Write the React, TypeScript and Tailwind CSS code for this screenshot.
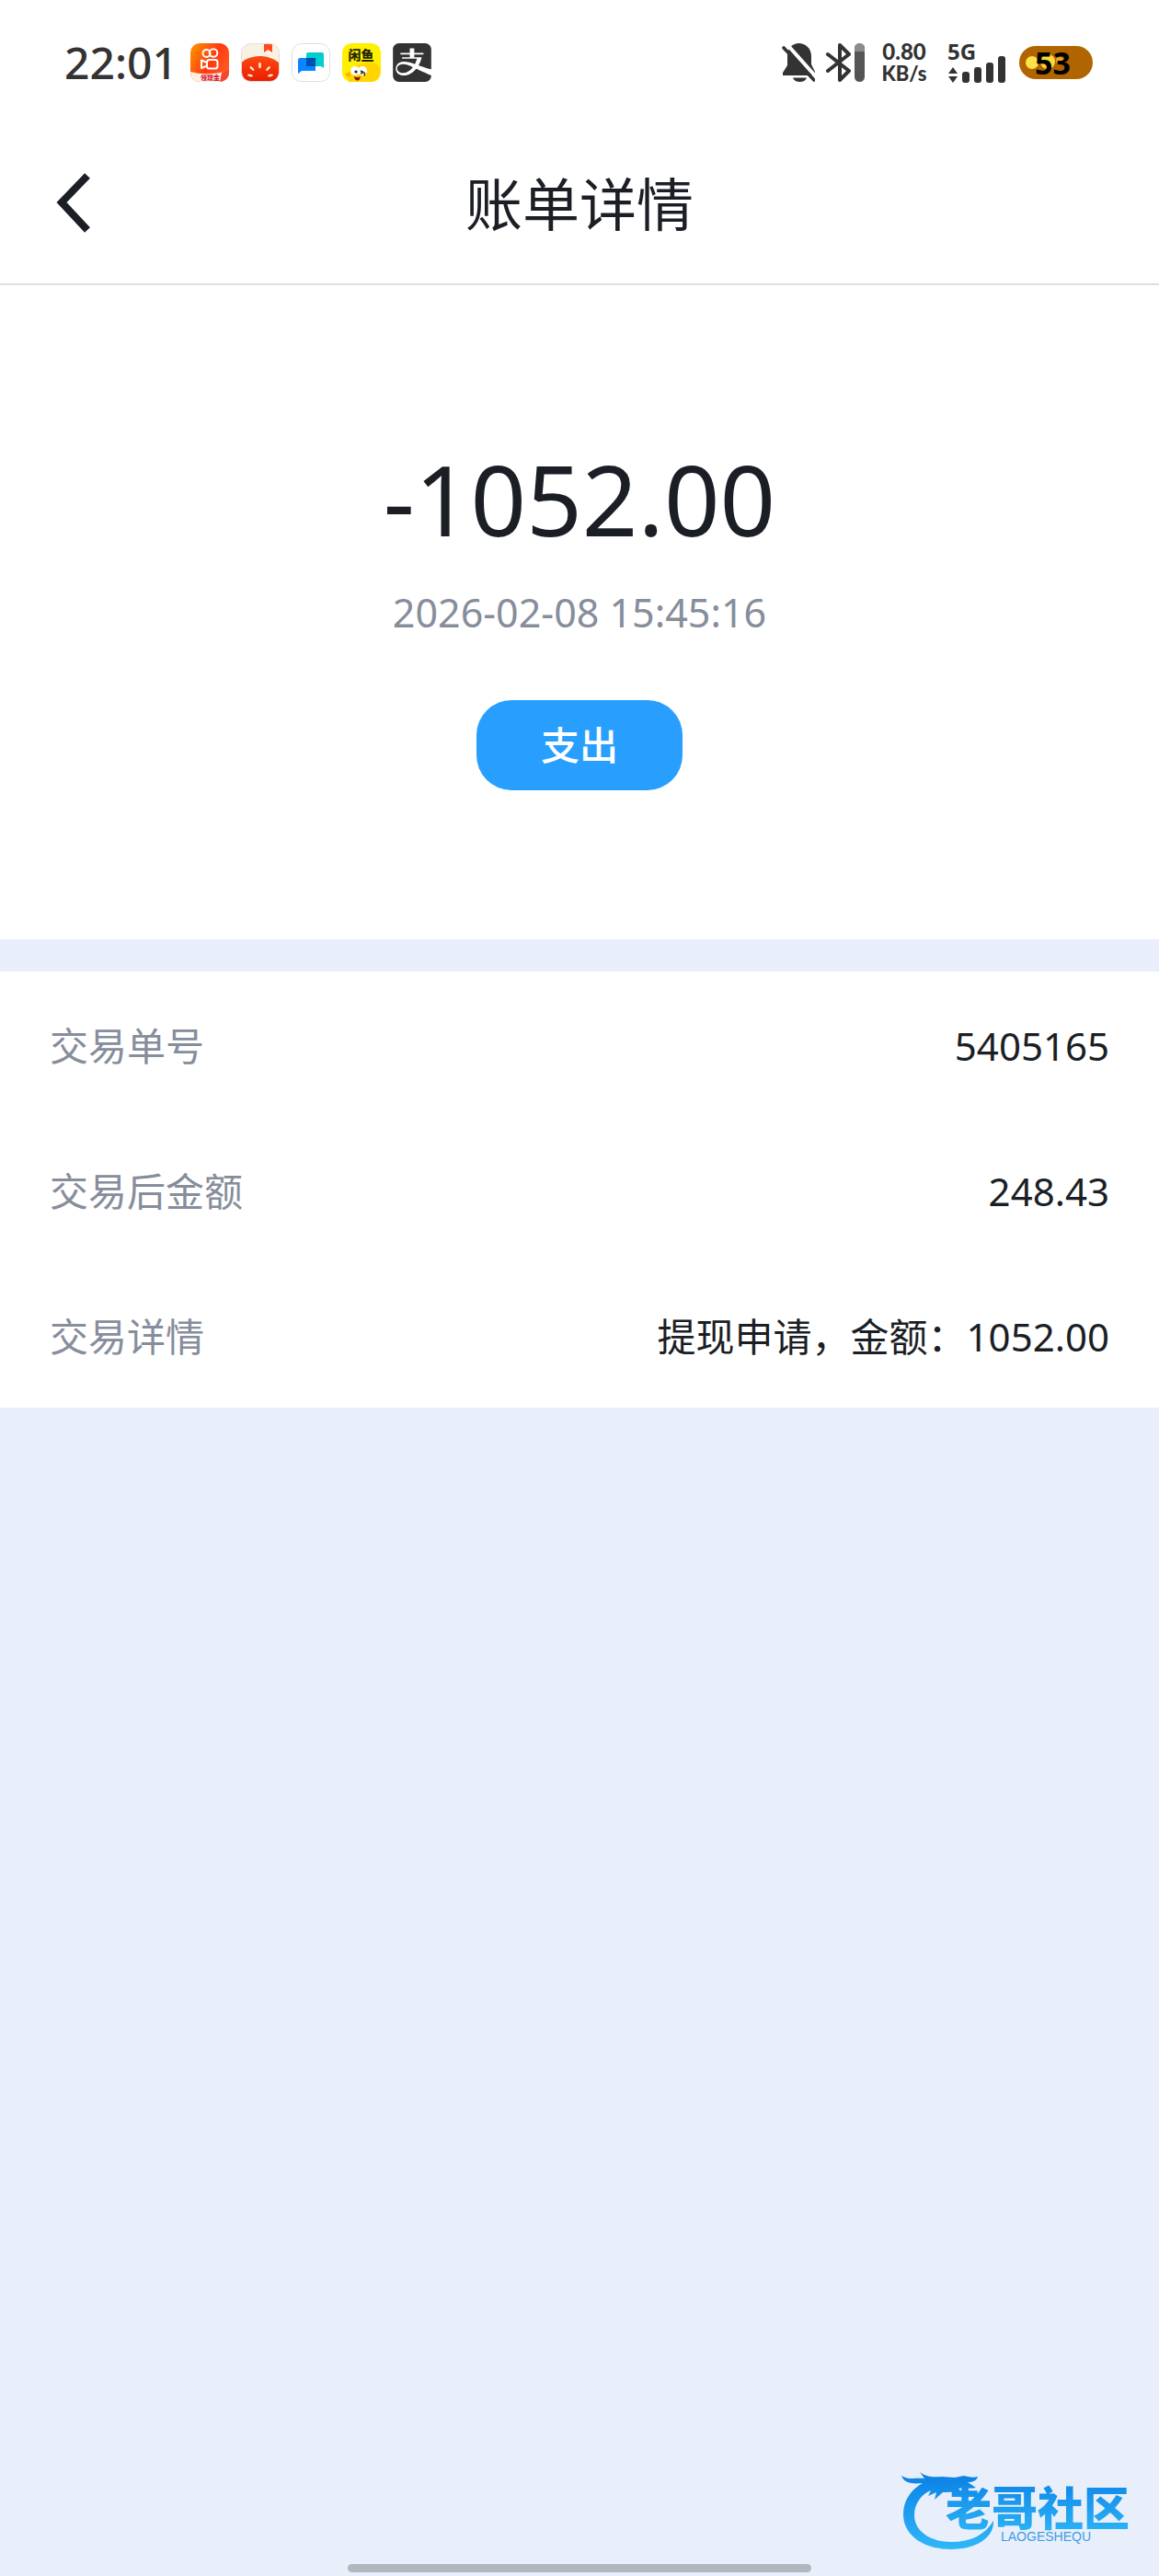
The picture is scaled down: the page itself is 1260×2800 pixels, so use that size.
import { SiAlipay } from "react-icons/si";

const details = [
    { label: "交易单号", value: "5405165" },
    { label: "交易后金额", value: "248.43" },
    { label: "交易详情", value: "提现申请，金额：1052.00" },
];

function KuaishouIcon() {
    return (
        <svg viewBox="0 0 42 42" className="size-[42px]" aria-hidden="true">
            <defs>
                <linearGradient id="ks" x1="0" y1="0" x2="1" y2="0.6">
                    <stop offset="0" stopColor="#ff9a00" />
                    <stop offset="0.6" stopColor="#ff3a10" />
                    <stop offset="1" stopColor="#ff5a24" />
                </linearGradient>
                <clipPath id="ksClip">
                    <rect width="42" height="42" rx="10" />
                </clipPath>
            </defs>
            <g clipPath="url(#ksClip)">
                <rect width="42" height="42" fill="url(#ks)" />
                <path d="M0 31q18 5 42-1v12H0z" fill="#fff1e0" />
                <path d="M34 32l8-3v8l-6 5h-4z" fill="#f4472c" />
                <g fill="none" stroke="#fff" strokeWidth="2">
                    <circle cx="17.500" cy="11" r="4" />
                    <circle cx="25" cy="10.500" r="4.300" />
                    <rect x="18" y="18" width="11.500" height="9.500" rx="2.500" />
                    <path d="M18 21l-6-2.500v8.500l6-2.500" strokeLinejoin="round" />
                </g>
                <text x="11" y="39.500" fontSize="7" fontWeight="900" fill="#d81e3a" fontFamily="Noto Sans CJK SC, sans-serif">
                    领现金
                </text>
            </g>
        </svg>
    );
}

function TomatoIcon() {
    return (
        <svg viewBox="0 0 42 42" className="size-[42px]" aria-hidden="true">
            <defs>
                <linearGradient id="tomato" x1="0" y1="0" x2="0" y2="1">
                    <stop offset="0" stopColor="#ff4a12" />
                    <stop offset="1" stopColor="#e81c00" />
                </linearGradient>
                <clipPath id="tomatoClip">
                    <rect x="0.500" y="0.500" width="41" height="41" rx="10" />
                </clipPath>
            </defs>
            <g clipPath="url(#tomatoClip)">
                <rect width="42" height="42" fill="#f8f1e4" />
                <path d="M25 0h9v10l-4.500-3-4.500 3z" fill="#ff4b1f" />
                <path d="M0 22c5-7 16-8 22-8s15 3 20 8v20H0z" fill="url(#tomato)" />
                <g fill="#ffe9cf">
                    <ellipse cx="20.500" cy="24" rx="1.400" ry="3.200" />
                    <ellipse cx="12" cy="27.500" rx="1.300" ry="3.100" transform="rotate(-42 12 27.500)" />
                    <ellipse cx="29.500" cy="27.500" rx="1.300" ry="3.100" transform="rotate(42 29.500 27.500)" />
                    <ellipse cx="10" cy="35" rx="3" ry="1.300" transform="rotate(8 10 35)" />
                    <ellipse cx="32" cy="35" rx="3" ry="1.300" transform="rotate(-8 32 35)" />
                </g>
            </g>
            <rect x="0.500" y="0.500" width="41" height="41" rx="10" fill="none" stroke="#e6ded6" />
        </svg>
    );
}

function ChatIcon() {
    return (
        <svg viewBox="0 0 42 42" className="size-[42px]" aria-hidden="true">
            <rect x="0.500" y="0.500" width="41" height="41" rx="10" fill="#fff" stroke="#dedede" />
            <path d="M18 10h15q2 0 2 2v15l-3-2H16V12q0-2 2-2z" fill="#00cdd2" />
            <path d="M9 16h17v14H11l-4 3V18q0-2 2-2z" fill="#0a84ff" />
            <path d="M16 16h10v9H16z" fill="#0050b4" />
        </svg>
    );
}

function XianyuIcon() {
    return (
        <svg viewBox="0 0 42 42" className="size-[42px]" aria-hidden="true">
            <rect width="42" height="42" rx="10" fill="#ffef00" />
            <path d="M7 42c-1-6-1-13 5-16 6-4 15-5 22-5 6 2 8 6 7 12-1 5-4 9-9 9z" fill="#ffd500" />
            <path d="M3 33l5-2 2 5-5 1z" fill="#ffb800" />
            <text x="6.500" y="18" fontSize="14" fontWeight="900" fill="#242400" fontFamily="Noto Sans CJK SC, sans-serif">
                闲鱼
            </text>
            <circle cx="14" cy="30" r="5" fill="#fff" />
            <circle cx="22" cy="30" r="5" fill="#fff" />
            <circle cx="15" cy="31" r="1.600" fill="#222" />
            <path d="M20 30l3 1.500-3 1.500M25 32q-2 2 0 3" stroke="#222" strokeWidth="1.400" fill="none" />
            <path d="M13 36q4 2 7 0-1 5-4 4.500-3-1-3-4.500z" fill="#8a1505" />
        </svg>
    );
}

function BellOffIcon() {
    return (
        <svg viewBox="0 0 36 42" className="h-[42px] w-9" aria-hidden="true">
            <path d="M6 14C6 5 12 0 18.500 0S32 5 32 14v9l4 8v4H1v-3l5-8z" fill="#333" />
            <path d="M12 37.500h15c-1 3-4 4.500-7.500 4.500S13 40.500 12 37.500z" fill="#333" />
            <path d="M4-.500L38 37.500" stroke="#fff" strokeWidth="4" />
            <path d="M2 5l33 35" stroke="#333" strokeWidth="3.600" strokeLinecap="round" />
        </svg>
    );
}

function BluetoothIcon() {
    return (
        <svg viewBox="0 0 28 42" className="h-[42px] w-7" fill="none" stroke="#333" strokeWidth="4" strokeLinejoin="round" strokeLinecap="round" aria-hidden="true">
            <path d="M2 12l23 18-10 10V2l10 10L2 30" />
        </svg>
    );
}

function SignalIcon() {
    return (
        <svg viewBox="0 0 64 30" className="h-[30px] w-16" fill="#333" aria-hidden="true">
            <path d="M6 13l5 7H1zM6 30l5-7H1z" />
            <rect x="16" y="18" width="8" height="12" rx="3" />
            <rect x="29" y="13" width="8" height="17" rx="3" />
            <rect x="42" y="8" width="8" height="22" rx="3" />
            <rect x="55" y="1" width="8" height="29" rx="3" />
        </svg>
    );
}

function StatusBar() {
    return (
        <div className="flex h-[136px] items-center justify-between pr-[72px] pl-[70px] text-[#333]">
            <div className="flex items-center gap-[13px]">
                <span className="w-[124px] text-[48px] leading-[48px] font-medium">22:01</span>
                <KuaishouIcon />
                <TomatoIcon />
                <ChatIcon />
                <XianyuIcon />
                <SiAlipay className="size-[42px]" />
            </div>

            <div className="flex items-center">
                <BellOffIcon />
                <div className="ml-3 flex items-center gap-[3px]">
                    <BluetoothIcon />
                    <div className="h-[42px] w-[11px] overflow-hidden rounded-full bg-[#555]">
                        <div className="h-[9px] bg-[#8c8c8c]" />
                    </div>
                </div>
                <div className="ml-4 flex w-[54px] flex-col items-center font-['Lato',sans-serif] text-[24px] leading-[24px] font-black">
                    <span>0.80</span>
                    <span className="text-[22px]">KB/s</span>
                </div>
                <div className="ml-5 flex flex-col">
                    <span className="h-[14px] text-[24px] leading-[20px] font-bold">5G</span>
                    <SignalIcon />
                </div>
                {/* Battery */}
                <div className="relative ml-[14px] flex h-9 w-20 items-center rounded-full bg-[#b06500]">
                    <svg viewBox="0 0 80 36" className="absolute inset-0 size-full" aria-hidden="true">
                        <circle cx="14" cy="18" r="7" fill="#ffe24a" />
                        <circle cx="31" cy="17" r="8" fill="#ffd83a" />
                        <circle cx="44" cy="16" r="4" fill="#e8a820" />
                    </svg>
                    <span className="relative pl-[17px] text-[34px] leading-[36px] font-bold text-black">53</span>
                </div>
            </div>
        </div>
    );
}

function Watermark() {
    return (
        <svg viewBox="0 0 264 88" className="h-[88px] w-[264px]" role="img" aria-label="老哥社区">
            <defs>
                <linearGradient id="wave" x1="0" y1="0" x2="0" y2="1">
                    <stop offset="0" stopColor="#0a7fe6" />
                    <stop offset="1" stopColor="#2fb8f8" />
                </linearGradient>
            </defs>
            {/* Dragon */}
            <path
                d="M2 6c8 5 16 2 25 3l-5-7c9 7 17 5 24 5l14 1 10-2c7 2 11 2 15 1-1 4-5 6-11 6l9 6c-7 2-14-1-19 1l5 5c-8-2-16-1-22-1l-9 8 2-8-9 4 3-6c-10 4-18 14-18 27 0 17 17 29 40 29 22 0 37-8 46-23 1 18-18 31-46 31C25 86 4 70 4 48c0-16 9-27 21-34C16 15 5 15 2 6z"
                fill="url(#wave)"
            />
            <text x="50" y="60" fontSize="50" fontWeight="900" fill="url(#wave)" fontFamily="Noto Sans CJK SC, sans-serif">
                老哥社区
            </text>
            <text x="110" y="77" fontSize="14" fill="#3d9be6" fontFamily="Liberation Sans, sans-serif">
                LAOGESHEQU
            </text>
        </svg>
    );
}

export default function App() {
    return (
        <div className="flex min-h-screen w-full flex-col bg-[#e8effa] font-['Noto_Sans','Noto_Sans_CJK_SC',sans-serif] text-[#1b1e25]">
            <div className="bg-white">
                <StatusBar />

                {/* Header */}
                <header className="grid h-[174px] grid-cols-[1fr_auto_1fr] items-center border-b-2 border-[#dedede] px-[54px]">
                    <button type="button" aria-label="返回" className="justify-self-start">
                        <svg viewBox="0 0 50 68" className="h-[68px] w-[50px]" fill="none" stroke="currentColor" strokeWidth="8" aria-hidden="true">
                            <path d="M41 3L13 32l28 30" />
                        </svg>
                    </button>
                    <h1 className="text-[62px] leading-[72px]">账单详情</h1>
                </header>

                {/* Amount */}
                <section className="flex flex-col items-center pt-[172px] pb-[162px]">
                    <p className="text-[106px] leading-[120px]">-1052.00</p>
                    <p className="mt-10 text-[43px] leading-[48px] text-[#868d9b]">2026-02-08 15:45:16</p>
                    <button type="button" className="mt-[71px] h-[98px] w-56 rounded-[38px] bg-[#289fff] text-[42px] leading-[48px] font-medium text-white">
                        支出
                    </button>
                </section>
            </div>

            {/* Details */}
            <dl className="mt-[35px] bg-white px-[54px] text-[42px] leading-[48px]">
                {details.map((item) => (
                    <div key={item.label} className="flex h-[158px] items-center justify-between pt-[3px]">
                        <dt className="text-[#868d9b]">{item.label}</dt>
                        <dd>{item.value}</dd>
                    </div>
                ))}
            </dl>

            <footer className="mt-auto flex flex-col items-center gap-[14px] pb-1">
                <div className="self-end pr-[18px]">
                    <Watermark />
                </div>
                <div className="h-[9px] w-2/5 rounded-full bg-[#b2b6bf]" />
            </footer>
        </div>
    );
}
